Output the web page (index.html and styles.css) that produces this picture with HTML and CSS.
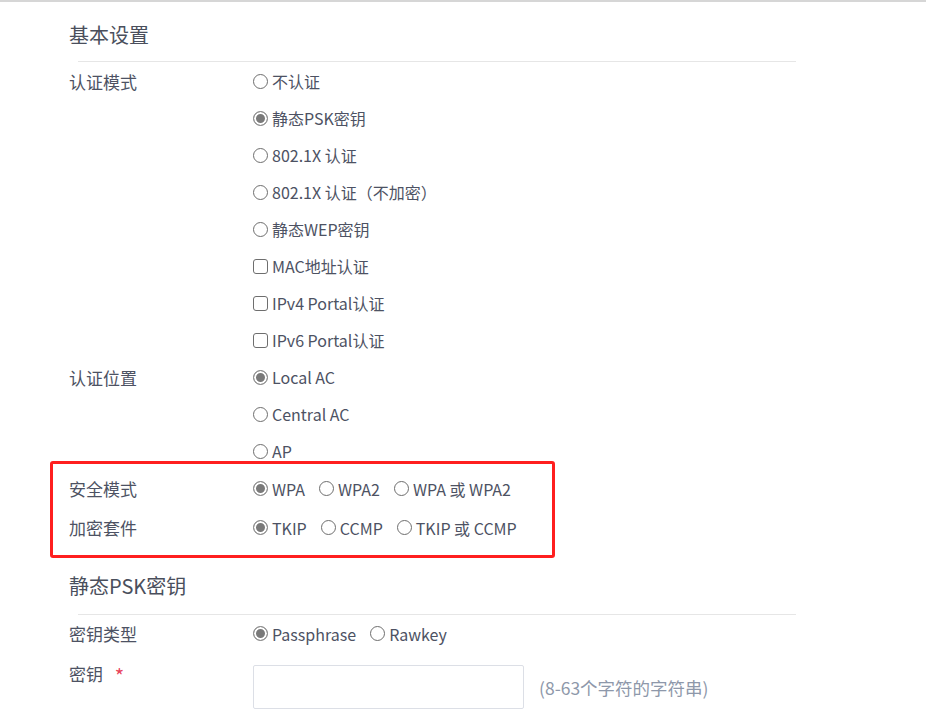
FILE: index.html
```html
<!DOCTYPE html>
<html lang="zh-CN">
<head>
    <meta charset="UTF-8">
    <meta name="viewport" content="width=device-width, initial-scale=1.0">
    <title>无线服务 - 安全设置</title>
    <link rel="stylesheet" href="styles.css">
</head>
<body>

    <div class="topline"></div>

    <div class="page">

        <div class="group first">
            <h2 class="group-title">基本设置</h2>
            <div class="divider"></div>

            <div class="form-body">
                <div class="form-row">
                    <div class="label">认证模式</div>
                    <div class="options stack">
                        <label class="opt"><span class="radio"></span>不认证</label>
                        <label class="opt"><span class="radio on"></span>静态PSK密钥</label>
                        <label class="opt"><span class="radio"></span>802.1X 认证</label>
                        <label class="opt"><span class="radio"></span>802.1X 认证（不加密）</label>
                        <label class="opt"><span class="radio"></span>静态WEP密钥</label>
                        <label class="opt"><span class="check"></span>MAC地址认证</label>
                        <label class="opt"><span class="check"></span>IPv4 Portal认证</label>
                        <label class="opt"><span class="check"></span>IPv6 Portal认证</label>
                    </div>
                </div>

                <div class="form-row">
                    <div class="label">认证位置</div>
                    <div class="options stack">
                        <label class="opt"><span class="radio on"></span>Local AC</label>
                        <label class="opt"><span class="radio"></span>Central AC</label>
                        <label class="opt"><span class="radio"></span>AP</label>
                    </div>
                </div>

                <!-- highlighted block -->
                <div class="highlight">
                    <div class="form-row tall">
                        <div class="label">安全模式</div>
                        <div class="options inline">
                            <label class="opt"><span class="radio on"></span>WPA</label>
                            <label class="opt"><span class="radio"></span>WPA2</label>
                            <label class="opt"><span class="radio"></span>WPA 或 WPA2</label>
                        </div>
                    </div>
                    <div class="form-row tall">
                        <div class="label">加密套件</div>
                        <div class="options inline">
                            <label class="opt"><span class="radio on"></span>TKIP</label>
                            <label class="opt"><span class="radio"></span>CCMP</label>
                            <label class="opt"><span class="radio"></span>TKIP 或 CCMP</label>
                        </div>
                    </div>
                </div>
            </div>
        </div>

        <div class="group second">
            <h2 class="group-title">静态PSK密钥</h2>
            <div class="divider"></div>

            <div class="form-body">
                <div class="form-row">
                    <div class="label">密钥类型</div>
                    <div class="options inline">
                        <label class="opt"><span class="radio on"></span>Passphrase</label>
                        <label class="opt"><span class="radio"></span>Rawkey</label>
                    </div>
                </div>

                <div class="form-row key-row">
                    <div class="label">密钥 <span class="required">*</span></div>
                    <div class="field">
                        <input type="text" class="text-input">
                        <span class="hint">(8-63个字符的字符串)</span>
                    </div>
                </div>
            </div>
        </div>

    </div>

</body>
</html>
```

FILE: styles.css
```css
body {
    font-family: "Noto Sans CJK SC", "Noto Sans", sans-serif;
    margin: 0;
    padding: 0;
    background-color: #ffffff;
    color: #4d5263;
}

.topline {
    height: 2px;
    background: #d6d6d6;
}

.page {
    padding-left: 69px;
}

.group-title {
    margin: 0;
    font-size: 20px;
    font-weight: normal;
    line-height: 28px;
    color: #4a4f5c;
}

.first .group-title {
    padding: 19px 0 12px;
}

.second .group-title {
    padding: 14px 0 14px;
}

.divider {
    margin-left: 9px;
    width: 718px;
    height: 1px;
    background: #e6e6e6;
}

.form-body {
    padding-top: 0.5px;
}

.form-row {
    display: flex;
    align-items: flex-start;
}

.label {
    width: 184px;
    flex-shrink: 0;
    font-size: 17px;
    line-height: 37px;
}

.options {
    display: flex;
    font-size: 16px;
}

.options.stack {
    flex-direction: column;
}

.options.inline {
    gap: 14px;
}

.opt {
    display: flex;
    align-items: center;
    height: 37px;
    cursor: pointer;
    white-space: nowrap;
}

.radio,
.check {
    box-sizing: border-box;
    width: 15px;
    height: 15px;
    margin-right: 4px;
    border: 1px solid #6e6e6e;
    background: #fff;
    flex-shrink: 0;
}

.radio {
    border-radius: 50%;
}

.radio.on {
    border-color: #8a8a8a;
    background: #7a7a7a;
    box-shadow: inset 0 0 0 2px #fff;
}

.check {
    border-radius: 3px;
}

/* red annotation frame */
.highlight {
    margin: -9px 0 0 -19px;
    width: 505px;
    box-sizing: border-box;
    border: 3px solid #ff1f1f;
    border-radius: 3px;
    padding: 6px 0 8px 16px;
}

.form-row.tall + .form-row.tall {
    margin-top: 1px;
}

.form-row.tall .label {
    line-height: 38px;
}

.form-row.tall .opt {
    height: 38px;
}

.key-row {
    margin-top: 13px;
}

.key-row .label {
    line-height: 18px;
}

.required {
    color: #e8435a;
    margin-left: 8px;
    font-size: 20px;
    vertical-align: -3px;
}

.field {
    display: flex;
    align-items: center;
}

.text-input {
    box-sizing: border-box;
    width: 271px;
    height: 44px;
    border: 1px solid #dcdfe6;
    border-radius: 2px;
    margin: 0;
}

.hint {
    margin-left: 15px;
    font-size: 17.5px;
    color: #8e98aa;
}
```
